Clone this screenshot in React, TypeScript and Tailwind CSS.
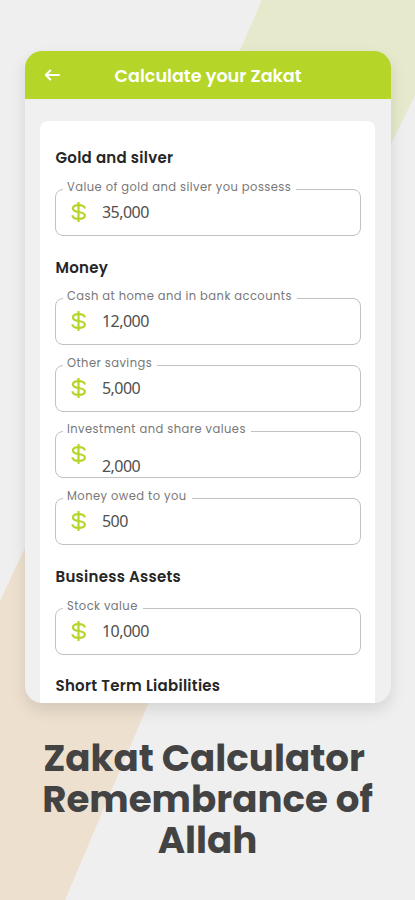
import React from "react";

const poppins = "font-['Poppins','Inter',sans-serif] whitespace-nowrap";

function Dollar() {
  return (
    <svg className="-mt-px" width="16" height="22" viewBox="0 0 16 22" fill="none" stroke="#b5d629" strokeWidth="2.2">
      <path d="M7.500 1v20" />
      <path d="M13.700 7.600C13.700 5.100 11.400 4.100 7.600 4.100S1.900 5.300 1.900 7.500C1.900 9.800 4.600 10.500 7.700 11C11.200 11.600 13.900 12.300 13.900 14.600C13.900 17 11.500 17.900 7.700 17.900S1.500 16.900 1.500 14.300" />
    </svg>
  );
}

type FieldProps = { label: string; value: string; low?: boolean };

function Field({ label, value, low }: FieldProps) {
  return (
    <div className="relative flex h-[47px] w-[306px] items-center rounded-[8px] border-[1.5px] border-[#c2c2c2] pl-[15px]">
      <span className={`${poppins} absolute -top-[10px] left-[7px] bg-white pl-1 pr-[5px] text-[11.5px] leading-[14px] tracking-[0.45px] text-[#777]`}>
        {label}
      </span>
      <Dollar />
      <span className={`ml-[15px] font-['Noto_Sans',sans-serif] text-[16px] leading-5 tracking-[-0.55px] text-[#505050] ${low ? "pt-[22px]" : "-mt-px"}`}>{value}</span>
    </div>
  );
}

function Heading({ text }: { text: string }) {
  return <h2 className={`${poppins} h-5 pl-[0.5px] text-[15px] font-semibold leading-5 tracking-[0.28px] text-[#262626]`}>{text}</h2>;
}

export default function App() {
  return (
    <div className="relative h-[900px] w-[415px] overflow-hidden bg-[#efefef]">
      <svg className="absolute inset-0" width="415" height="900" viewBox="0 0 415 900">
        <path d="M262 0H415V95L380 167H220V96Z" fill="#e6e9cb" />
        <path d="M0 601L30 537L170 650L149 702L65 900H0Z" fill="#ede0cf" />
      </svg>
      <div className="relative flex flex-col items-center pt-[51px]">
        <main className="flex h-[652px] w-[366px] flex-col overflow-hidden rounded-[17px] bg-[#f0f0f0] shadow-[0_7px_16px_rgba(0,0,0,0.11)]">
          <header className="flex h-12 shrink-0 items-center bg-[#b5d629] pl-[19px] text-white">
            <svg width="17" height="12" viewBox="0 0 17 12" fill="none" stroke="white" strokeWidth="2" strokeLinecap="round" strokeLinejoin="round">
              <path d="M15 6H2M6.300 1.500L1.800 6L6.300 10.500" />
            </svg>
            <h1 className={`${poppins} ml-[54px] mt-[2px] text-[17.600px] font-semibold leading-6`}>Calculate your Zakat</h1>
          </header>
          <section className="ml-[15.5px] mt-[22px] flex w-[335px] grow flex-col rounded-t-[8px] bg-white pl-[15px] pt-[27px]">
            <Heading text="Gold and silver" />
            <div className="mt-[21px]">
              <Field label="Value of gold and silver you possess" value="35,000" />
            </div>
            <div className="mt-[22px]"><Heading text="Money" /></div>
            <div className="mt-[20px] flex flex-col gap-[19.6px]">
              <Field label="Cash at home and in bank accounts" value="12,000" />
              <Field label="Other savings" value="5,000" />
              <Field label="Investment and share values" value="2,000" low />
              <Field label="Money owed to you" value="500" />
            </div>
            <div className="mt-[22px]"><Heading text="Business Assets" /></div>
            <div className="mt-[21px]">
              <Field label="Stock value" value="10,000" />
            </div>
            <div className="mt-[21.5px]"><Heading text="Short Term Liabilities" /></div>
          </section>
        </main>
        <div className={`${poppins} mt-[35px] flex flex-col items-center text-[37.2px] font-bold leading-[41px] text-[#434343]`}>
          <p className="mr-[7px]">Zakat Calculator</p>
          <p>Remembrance of</p>
          <p>Allah</p>
        </div>
      </div>
    </div>
  );
}
